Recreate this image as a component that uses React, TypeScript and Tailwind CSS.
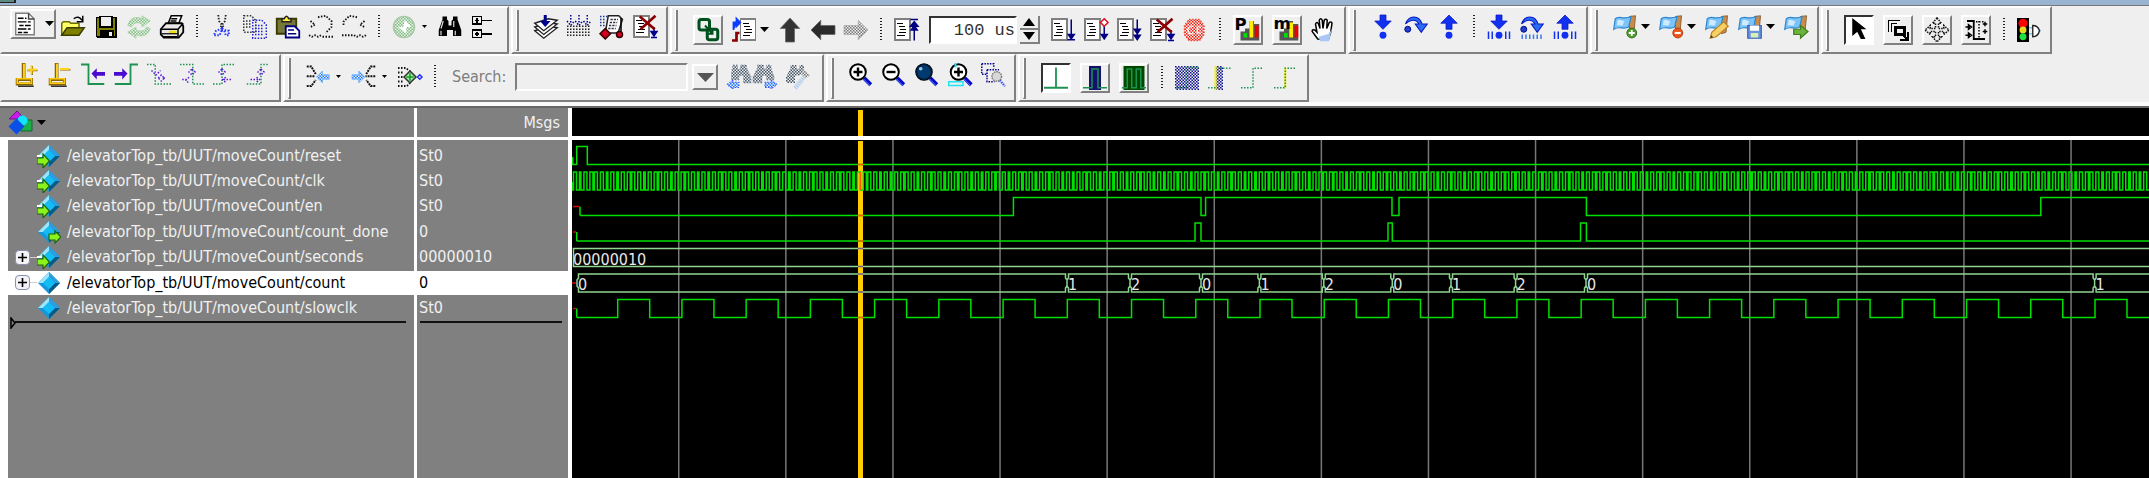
import React from 'react';

type IconName = keyof typeof icons;

const page = (
  <g shapeRendering="crispEdges">
    <path d="M0 0h11v15H0z" fill="#808080" />
    <path d="M1 1h9v13H1z" fill="#fff" />
    <path d="M2 3.5h4M3 5.5h4M4 7.5h4M3 9.5h5M2 11.5h5" stroke="#000" />
  </g>
);

const bookmark = (
  <g>
    <path d="M11 1l4-.5-1 11-3 1z" fill="#c98d4b" stroke="#8a5a2b" strokeWidth=".6" />
    <path d="M1.5 2.5C4 0 7 3.500 12 1l-1.500 7C7 10 4 7 .5 9.500z" fill="#7cc4f7" stroke="#2f86cf" strokeWidth=".8" />
    <path d="M3 3.500c2-1 3 .5 4.500.5L6.500 7C5 7 3.500 6.500 2.500 7z" fill="#cdeaff" />
  </g>
);

const lens = (
  <g>
    <path d="M10 10l4.500 4.500" stroke="#0808c8" strokeWidth="2.600" />
    <path d="M9.500 10.500l4.500 4.500" stroke="#4a6cf0" strokeWidth=".7" />
    <circle cx="6" cy="6" r="5.200" fill="#fff" stroke="#000" strokeWidth="1.300" />
  </g>
);

const stepDown = <path d="M6 0h4v4h3.500L8 9.500 2.500 4H6z" fill="#1230f0" stroke="#0a1ac0" strokeWidth=".5" />;
const stepUp = <path d="M6 9.500h4V5.500h3.500L8 0 2.500 5.500H6z" fill="#1230f0" stroke="#0a1ac0" strokeWidth=".5" />;
const stepOver = (
  <g>
    <path d="M1 6C3 0 10-.5 12 6h3.500L11.500 11.500 7.500 6H10C8 2.500 4 3 1 6z" fill="#2a6cf5" stroke="#0a1ac0" strokeWidth=".7" />
    <circle cx="2.500" cy="9.500" r="2" fill="#2040d0" stroke="#000080" strokeWidth=".6" />
  </g>
);
const bars = <path d="M1 11v5M3.500 11v5M12.500 11v5M15 11v5" stroke="#1230f0" strokeWidth="1" />;

const icons = {
  open: (
    <g>
      <path d="M.5 13.500V5.500l1-1h4l1 1H12v3" fill="#ffff66" stroke="#6b6b00" />
      <path d="M.5 13.500L4 8.500h11.500L12 13.500z" fill="#808000" stroke="#3d3d00" />
      <path d="M8.500 2.500q3-2.500 5.500 1M14.500.5v4h-4" stroke="#000" />
    </g>
  ),
  save: (
    <g shapeRendering="crispEdges">
      <path d="M1 1h14v14H2l-1-1z" fill="#000" />
      <path d="M2 2h12v12H2z" fill="#808000" />
      <path d="M4 1h8v7H4z" fill="#efefef" stroke="#000" />
      <path d="M4 10h9v5H4z" fill="#000" />
      <path d="M10 11h2v3h-2z" fill="#efefef" />
    </g>
  ),
  refresh: (
    <g fill="url(#dither-green)" stroke="#a9d5a9" strokeWidth=".6">
      <path d="M.5 7C2 1 7 1 10 2.500V.5L15.500 4 10 8V6C6 4 4 6 3 8z" />
      <path d="M15.500 9C14 14 9 15 6 13v2.500L.5 11.500 6 8v2c3 1.500 6 .5 7-2z" />
    </g>
  ),
  print: (
    <g>
      <path d="M5.500 5.500L7.500.5h7L12.500 5.500z" fill="#fff" stroke="#000" />
      <path d="M.5 9.500l3.500-4h10.500l1 2v4l-3 3.500h-10l-2-2z" fill="#e8e8e8" stroke="#000" strokeWidth="1.200" />
      <path d="M.5 9.500h11.500l3.500-4M7.500 2.500h4M7 4h4M2.500 14.500h9M12 9.500v5" stroke="#000" />
      <path d="M6 11.500h5" stroke="#f0e000" strokeWidth="2" />
      <path d="M1 12.500h11" stroke="#000" strokeWidth=".8" />
    </g>
  ),
  cut: (
    <g strokeDasharray="1 1">
      <path d="M5.500 0l.5 4 3 4M10.500 0L10 4 7 8" stroke="#222" strokeWidth="1.200" />
      <path d="M8 8v3M8 9l3 1.500h1.500v3h-2l-1-3M8 9l-4 1.500-1.500 3h4l1-3" stroke="#2030ff" strokeWidth="1.300" />
    </g>
  ),
  copy: (
    <g strokeDasharray="1 1">
      <path d="M.5.5h5l3 3v8h-8zM2 4h4M2 6h4M2 8h4" stroke="#333" />
      <path d="M6.500 3.500h6l3 3v9h-9zM8 7h5M8 9h6M8 11h6M8 13h6" stroke="#2222d8" />
    </g>
  ),
  paste: (
    <g>
      <path d="M.5 2.500h13v10H.5z" fill="#77773a" stroke="#3b3b00" strokeWidth="1.200" />
      <path d="M4 4.500V2.500h1.500Q7-.8 8.500 2.500H10v2z" fill="#ffee33" stroke="#222" />
      <path d="M6.500 7.500h6l3 3v4.500h-9z" fill="#fff" stroke="#000080" strokeWidth="1.200" />
      <path d="M8 10h4M8 12.500h5.500" stroke="#000080" />
    </g>
  ),
  undo: (
    <g stroke="#111" strokeDasharray="1 1" strokeWidth="1.200">
      <path d="M1 4l3 2.500L1 8M6 1.500l5-1 4 3.500v4l-4 4" />
      <path d="M0 13.500l2 1 2-1 2 1 2-1M9 14.500h7" />
    </g>
  ),
  redo: (
    <g stroke="#111" strokeDasharray="1 1" strokeWidth="1.200">
      <path d="M15 4l-3 2.500 3 1.500M10 1.500l-5-1-4 4v3" />
      <path d="M16 13.500l-2 1-2-1-2 1-2-1M7 13.500H0" />
    </g>
  ),
  run: (
    <g>
      <circle cx="8" cy="8" r="7" fill="url(#dither-green)" stroke="#a9c9a9" />
      <path d="M8.500 3.500L13 8H9.500v4.500L4 8h3.500z" fill="#fff" />
    </g>
  ),
  find: (
    <g fill="#000">
      <path d="M3 1h3v2l1 1v3h2V4l1-1V1h3v2l2.500 7v4H10v-4H6v4H.5v-4L3 3z" />
      <path d="M3.500 4L2 9M10.500 4v4M2 10.500v3M11.500 10.500v3" stroke="#ddd" strokeWidth=".8" />
    </g>
  ),
  tree: (
    <g stroke="#000" shapeRendering="crispEdges">
      <path d="M1 1h6v5H1zM1 10h6v5H1z" strokeWidth="1.300" />
      <path d="M7 3.500h7M7 12.500h7M4 2v3M2.500 3.500h3M4 11v3M2.500 12.500h3" />
    </g>
  ),
  layers: (
    <g fill="#fff" stroke="#222" strokeWidth=".9">
      <path d="M.5 10.500l9-3 6 1-9 7z" />
      <path d="M.5 8l9-3 6 1-9 7z" />
      <path d="M.5 5.500l9-3 6 1-9 7z" />
      <path d="M6.500 0h2v4h2.500L7.500 8 4 4h2.500z" fill="#000090" stroke="none" />
    </g>
  ),
  layersAll: (
    <g strokeDasharray="1 1">
      <path d="M2.500 0v5M8 0v5M13.500 0v5M0 4l2.500 3L5 4M5.500 4L8 7l2.500-3M11 4l2.500 3L16 4" stroke="#000090" />
      <path d="M0 7.500h16M0 9.500h16M0 11.500h16M0 13.500h16" stroke="#222" />
    </g>
  ),
  profile: (
    <g>
      <path d="M5.500.5h7l2.500 2.500-3 9H3.500z" fill="#fff" stroke="#222" />
      <path d="M7 3h5M6.500 5h5M6 7h5M5.500 9h5" stroke="#334" strokeDasharray="1.500 .7" />
      <path d="M0 1h5M0 3h4M0 5h4M0 7h3" stroke="#223a9a" strokeDasharray="1 1" />
      <path d="M3.500 9l3.500 3.500L3.500 16 0 12.500z" fill="#d00020" stroke="#300" />
      <circle cx="13" cy="13" r="2" fill="#d00020" stroke="#300" />
      <path d="M14 2v9" stroke="#000" />
    </g>
  ),
  pageDelete: (
    <g>
      {page}
      <path d="M14 8v6M12 11h4l-2 3z M12 15h4" stroke="#000090" fill="#000090" />
      <path d="M4.500 1l10 8.500M15 .5L5 9.500" stroke="#8b0000" strokeWidth="1.800" />
    </g>
  ),
  link: (
    <g stroke="#00501e" strokeWidth="2">
      <rect x="2" y="1" width="7" height="7" rx="1.500" />
      <rect x="7.500" y="7.500" width="7" height="7" rx="1.500" />
      <path d="M6 5l5 5.500M8 10.500h3V7" strokeWidth="1.300" />
    </g>
  ),
  restart: (
    <g>
      <g transform="translate(5 0)">{page}</g>
      <path d="M1 8V3h3M3 .5v5L5.500 3z" stroke="#0a3cff" fill="#0a3cff" strokeWidth="1.200" />
      <path d="M0 15h3v-5h2" stroke="#8b0000" strokeWidth="1.800" />
    </g>
  ),
  up: <path d="M8 0l6.500 7H11v9H5V7H1.500z" fill="#333" stroke="#666" strokeWidth=".5" />,
  left: <path d="M0 8l6.500-6.500V5H16v6H6.500v3.500z" fill="#2b2b2b" stroke="#666" strokeWidth=".5" />,
  right: <path d="M16 8L9.500 1.500V5H0v6h9.500v3.500z" fill="url(#dither-gray)" stroke="#aaa" strokeWidth=".5" />,
  pageUp: <g>{page}<path d="M13.500 3v12M11 1h5M11 5.500l2.500-3 2.500 3zM11.500 8l2-3 2 3z" stroke="#000080" fill="#000080" /></g>,
  pageRun: <g>{page}<path d="M13.500 1v12M11.500 11h4l-2 3zM11 14.500h5" stroke="#000080" fill="#000080" /></g>,
  pageContinue: (
    <g>
      {page}
      <path d="M13.500 5v8M11.500 11h4l-2 3z" stroke="#000080" fill="#000080" />
      <path d="M13.500 .5L16 3l-2.500 2.500L11 3z" fill="#fff" stroke="#e01020" />
    </g>
  ),
  pageRunAll: <g>{page}<path d="M13.500 1v12M11.500 7.500h4l-2 3zM11.500 11.500h4l-2 3z" stroke="#000080" fill="#000080" /></g>,
  stop: (
    <g>
      <path d="M4 1h7l3 4v6l-3 4H4l-3-4V5z" fill="url(#dither-red)" stroke="#f04a35" strokeDasharray="1 1" />
      <path d="M7 5.500H4.500L3 8l1.500 2.500H7M12 6H9.500v4H12" stroke="#fff" strokeWidth=".8" />
    </g>
  ),
  perf: (
    <g>
      <path d="M3 15V9h3v-2h3V2h3v2h3.500v11z" fill="#555" />
      <path d="M5 10h2.500v3H5z" fill="#0d0" />
      <path d="M9 2h2.500v11H9z" fill="#fe0" />
      <path d="M12.500 5H15v8h-2.500z" fill="#e00" />
      <text x="-1" y="8" fontSize="11" fontWeight="700" fill="#000" className="font-['DejaVu_Sans']">P</text>
    </g>
  ),
  memory: (
    <g>
      <path d="M3 15V9h3v-2h3V2h3v2h3.500v11z" fill="#555" />
      <path d="M6 10h2.500v3H6z" fill="#0d0" />
      <path d="M9.500 3H12v10H9.500z" fill="#fe0" />
      <path d="M13 5h2.500v8H13z" fill="#e00" />
      <text x="-1" y="7" fontSize="11" fontWeight="700" fill="#000" className="font-['DejaVu_Sans']">m</text>
    </g>
  ),
  hand: (
    <g>
      <path d="M4.500 14L.8 9Q.5 7.500 2.500 8l1.500 1.500L3 4q1-2 2 0l1 3-.5-5.500q1-2 2 0L8 7l.8-5.500q1-1.500 2 0L10.500 7l1.700-4q1.500-1 1.800.5L13 10l-1.500 4.500z" fill="#fff" stroke="#000" />
      <path d="M5 12.500l7-2 2-3.500-2 8.500H6z" fill="#aac8f5" />
    </g>
  ),
  stepIn: <g>{stepDown}<circle cx="8" cy="13.500" r="2.300" fill="#1230f0" /></g>,
  stepOver,
  stepOut: <g>{stepUp}<circle cx="8" cy="13.500" r="2.300" fill="#1230f0" /></g>,
  stepInBars: <g>{stepDown}<circle cx="8" cy="13.500" r="2.300" fill="#1230f0" />{bars}</g>,
  stepOverBars: <g>{stepOver}<path d="M1.500 13v3M4 13v3M6.500 13v3M9 13v3M11.500 13v3M14 13v3" stroke="#3f78ee" /></g>,
  stepOutBars: <g>{stepUp}<circle cx="8" cy="13.500" r="2.300" fill="#1230f0" />{bars}</g>,
  markAdd: <g>{bookmark}<circle cx="12.500" cy="12" r="3.300" fill="#4c9a2e" stroke="#2e6e18" strokeWidth=".6" /><path d="M12.500 10v4M10.500 12h4" stroke="#fff" strokeWidth="1.200" /></g>,
  markRemove: <g>{bookmark}<circle cx="12.500" cy="12" r="3.300" fill="#e8561c" stroke="#b03a0c" strokeWidth=".6" /><path d="M10.500 12h4" stroke="#fff" strokeWidth="1.400" /></g>,
  markEdit: <g>{bookmark}<path d="M3.500 15.500l1-4 8-7 3 3-8 7z" fill="#f8cf62" stroke="#b8862a" strokeWidth=".8" /><path d="M3.500 15.500l.6-2 1.400 1.400z" fill="#333" /></g>,
  markSave: <g>{bookmark}<path d="M6.500 7h9v8.500h-9z" fill="#6b93e0" stroke="#3a62b8" strokeWidth=".8" /><path d="M8 7h6v3.500H8z" fill="#fff" /><path d="M8.500 12h5v3h-5z" fill="#d9f0b0" /></g>,
  markGo: <g>{bookmark}<path d="M6.500 9.500H11V7l5 4-5 4.500V13H6.500z" fill="#6cb33c" stroke="#3d7d1c" strokeWidth=".8" /></g>,
  pointer: <path d="M4 1l7.500 6H8.500l3 6.500H9.500L7 8.500 4 11z" fill="#000" stroke="#000" />,
  zoomMode: (
    <g stroke="#000" shapeRendering="crispEdges">
      <path d="M1.500 9V1.500h8M3.500 9V3.500h4" strokeWidth=".8" />
      <path d="M6 6h6v5H6z" strokeWidth="2" />
      <path d="M11 11l3 3M14.500 9v5.500H9" strokeWidth="1.200" />
    </g>
  ),
  pan: (
    <g stroke="#111" strokeDasharray="1 .7">
      <path d="M8 0l3 3.500H9v3.500h3.500V5L16 8l-3.500 3V9H9v3.500h2L8 16l-3-3.500h2V9H3.500v2L0 8l3.500-3v2H7V3.500H5z" />
    </g>
  ),
  edit: (
    <g stroke="#000">
      <path d="M2 2h4.500v12H14" strokeWidth="1.200" />
      <path d="M6 2.500h8M10 2v12" strokeDasharray="1 1" />
      <path d="M1 6h3M1 11.500h3M3 4.500v3L5 6zM3 10v3l2-1.500zM15.500 4h-3M15.500 9h-3M14 2.500v3M14 7.500v3" />
    </g>
  ),
  traffic: (
    <g>
      <path d="M0 0h8v16H0z" fill="#000" />
      <circle cx="4" cy="3.500" r="3" fill="#f00" />
      <circle cx="4" cy="8" r="2.300" fill="#e8d820" />
      <circle cx="4" cy="12.500" r="2.300" fill="#20e040" />
      <path d="M8 6.500h2.500M8 10.500h2.500M15 8.500h1" stroke="#7ac8ee" />
      <path d="M10.500 5v7.500q3.500 0 4.500-4-1-3.500-4.500-3.500z" fill="#fff" stroke="#222" strokeWidth=".9" />
    </g>
  ),
  cursorAdd: (
    <g>
      <path d="M5 .5h1.500v10H5zM8 5h7M11.500 2v6" stroke="#8a6400" />
      <path d="M6 .5v10M8 4.500h6.500M11 1.500v6" stroke="#ffd21a" strokeWidth="1.200" />
      <path d="M1.500 11h9.500v3H1.500z" fill="#efefef" stroke="#8a6400" strokeWidth="2" />
      <path d="M1.500 10.500h9.500v3H1.500z" stroke="#ffcb05" />
      <path d="M2 15.500h10.500" stroke="#222" strokeWidth=".9" />
    </g>
  ),
  cursorRemove: (
    <g>
      <path d="M5 .5h1.500v10H5zM8 4.500h7" stroke="#8a6400" />
      <path d="M6 .5v10M8 4h6.500" stroke="#ffd21a" strokeWidth="1.200" />
      <path d="M1.500 11h9.500v3H1.500z" fill="#efefef" stroke="#8a6400" strokeWidth="2" />
      <path d="M1.500 10.500h9.500v3H1.500z" stroke="#ffcb05" />
      <path d="M2 15.500h10.500" stroke="#222" strokeWidth=".9" />
    </g>
  ),
  edgePrev: <g><path d="M0 1h5v13h10.500" stroke="#1f9150" strokeWidth="1.200" /><path d="M7 7l3.500-3.500V6H16v2.500h-5.500V11z" fill="#4a0ad0" /></g>,
  edgeNext: <g><path d="M16 1h-5v13H.5" stroke="#1f9150" strokeWidth="1.200" /><path d="M9 7L5.500 3.500V6H0v2.500h5.500V11z" fill="#4a0ad0" /></g>,
  fallPrev: <g strokeDasharray="1 1"><path d="M0 1h5.500v13H16" stroke="#1f9150" /><path d="M3 5l3 3 3-3M7.500 10l2-2 2 2-2 2zM11 10h2" stroke="#5a1ad8" /></g>,
  fallNext: <g strokeDasharray="1 1"><path d="M0 1h8.500v13H16" stroke="#1f9150" /><path d="M8 4l2 2-2 2-2-2zM6 9.500l-2 2 2 2M1.500 11h4" stroke="#5a1ad8" /></g>,
  risePrev: <g strokeDasharray="1 1"><path d="M14 1H6v13H0" stroke="#1f9150" /><path d="M6 4l2 2-2 2-2-2zM8.500 9.500l-2 1.500 2 2M7 11h5" stroke="#5a1ad8" /></g>,
  riseNext: <g strokeDasharray="1 1"><path d="M14.500 1H10v13H0" stroke="#1f9150" /><path d="M10 4l2 2-2 2-2-2zM7 9.500l2 1.500-2 2M3 11h5" stroke="#5a1ad8" /></g>,
  collapse: (
    <g>
      <path d="M.5 1h3l3 5M.5 7.500h5.500M.5 14h3l3-4" stroke="#111" strokeDasharray="1.300 .6" strokeWidth="1.300" />
      <path d="M7 8l4-4v2.500h4.500v3H11V12z" fill="url(#dither-blue)" stroke="#6ab0ff" strokeWidth=".5" />
    </g>
  ),
  expand: (
    <g>
      <path d="M15.500 1h-3l-3 5M15.500 7.500H9M15.500 14h-3l-3-4" stroke="#111" strokeDasharray="1.300 .6" strokeWidth="1.300" />
      <path d="M8.500 8l-4-4v2.500H0v3h4.500V12z" fill="url(#dither-blue)" stroke="#6ab0ff" strokeWidth=".5" />
    </g>
  ),
  merge: (
    <g>
      <path d="M0 2h5l3 2M0 5h3M0 8h3M0 11h3M0 14h6l2-2" stroke="#111" strokeDasharray="1 1" strokeWidth="1.200" />
      <path d="M8 4l4 4-4 4-4-4z" fill="#9fe89f" stroke="#333" />
      <path d="M8 5.500v5M5.500 8h5" stroke="#1a9a2a" />
      <path d="M14.500 6.500L16 8l-1.500 1.500L13 8z" stroke="#2030ff" />
    </g>
  ),
  findPrev: (
    <g>
      <path d="M4 0h3v2l1 1 1-1V0h4v2l3 6v4h-5V7H8v3H3V5z" fill="url(#dither-slate)" stroke="#8a98a8" strokeDasharray="1 1" strokeWidth=".6" />
      <path d="M0 13l4-3v1.500h4V15H4v1z" fill="url(#dither-blue)" stroke="#4050ff" strokeDasharray="1 1" strokeWidth=".7" />
    </g>
  ),
  findNext: (
    <g>
      <path d="M3 0h4v2l1 1 1-1V0h3v2l2 6v2H9V7H6v5H0V8l3-6z" fill="url(#dither-slate)" stroke="#8a98a8" strokeDasharray="1 1" strokeWidth=".6" />
      <path d="M16 13l-4-3v1.500H8V15h4v1z" fill="url(#dither-blue)" stroke="#4050ff" strokeDasharray="1 1" strokeWidth=".7" />
    </g>
  ),
  findOptions: (
    <g>
      <path d="M3 0h4v2l1 1 1-1V0h3v3L9 7H6v5H0V8l3-6z" fill="url(#dither-slate)" />
      <path d="M12 3l4 4-3 2-3-3z" fill="url(#dither-gray)" />
      <path d="M6 15.500L12 8" stroke="#b4cdf0" strokeWidth="3" strokeDasharray="1 .5" />
    </g>
  ),
  zoomIn: <g>{lens}<path d="M6 3v6M3 6h6" stroke="#000" strokeWidth="1.600" /></g>,
  zoomOut: <g>{lens}<path d="M3 6h6" stroke="#000" strokeWidth="1.600" /></g>,
  zoomFull: <g>{lens}<circle cx="6" cy="6" r="5" fill="#003a6e" stroke="#001a33" /><circle cx="3.800" cy="3.800" r="1.200" fill="#9cc4e8" /></g>,
  zoomCursor: (
    <g>
      <path d="M.5 12.500h9.500v2.500H.5z" stroke="#1ee4f4" />
      <g transform="translate(1 0)">{lens}</g>
      <path d="M7 3v6M4 6h6" stroke="#000" strokeWidth="1.600" />
      <path d="M5 0v3" stroke="#1ee4f4" strokeWidth="1.300" />
    </g>
  ),
  zoomArea: (
    <g>
      <path d="M.5.5h8v3M.5.5v7h3M4 4.500h8M4 4.500v8h5" stroke="#000090" strokeDasharray="1 .8" />
      <circle cx="10.500" cy="9" r="3.200" fill="#d8d8d8" stroke="#777" strokeDasharray="1 .6" />
      <path d="M12.500 11.500l3.500 4" stroke="#4a5cff" strokeWidth="1.600" strokeDasharray="1 .6" />
    </g>
  ),
  trace: <path d="M8 1v13.500M0 14.500h16" stroke="#1f9150" strokeWidth="1.200" />,
  traceEvents: <g><path d="M4 0h8v16H4z" fill="#12126e" /><path d="M0 14.500h6V2h4v12.500h6" stroke="#1f9150" /></g>,
  traceAll: <g><path d="M1 0h14v16H1z" fill="#004a00" /><path d="M0 14.500h3.500V2h3v12.500h3V2h3v12.500H16" stroke="#1f9150" /></g>,
  deltaAll: <g><path d="M0 0h16v16H0z" fill="url(#dither-navy)" /><path d="M1 14.500h7V1h8" stroke="#1f9150" strokeDasharray="1 1" /></g>,
  deltaNear: <g><path d="M5 0h5v16H5z" fill="url(#dither-navy)" /><path d="M5 0v16" stroke="#f2ee20" strokeWidth="1.400" /><path d="M0 14.500h5M8 1.500h7" stroke="#1f9150" strokeDasharray="1 1" /></g>,
  deltaOff: <path d="M0 14.500h8V1.500h7" stroke="#1f9150" strokeDasharray="1 1" />,
  deltaCursor: <g><path d="M7.500 1v14" stroke="#f2ee20" strokeWidth="1.400" /><path d="M0 14.500h7.500V1.500h7" stroke="#1f9150" strokeDasharray="1 1" /></g>,
};

const Glyph: React.FC<{ name: IconName }> = ({ name }) => (
  <svg className="size-6 shrink-0 overflow-visible" viewBox="0 0 16 16" fill="none" aria-hidden="true">{icons[name]}</svg>
);

const Caret: React.FC<{ small?: boolean }> = ({ small }) => (
  <svg className="h-1.5 w-[13px] shrink-0" viewBox="0 0 13 6" aria-hidden="true">
    <path d={small ? 'M6 1h5L8.500 4z' : 'M4 0h9L8.500 5z'} fill="#000" />
  </svg>
);

const Tool: React.FC<{ name: IconName; menu?: 'small' | 'large' }> = ({ name, menu }) => (
  <button type="button" aria-label={name} className="flex shrink-0 items-center">
    <Glyph name={name} />
    {menu && <Caret small={menu === 'small'} />}
  </button>
);

const RaisedTool: React.FC<{ name: IconName; pressed?: boolean }> = ({ name, pressed }) => (
  <button
    type="button"
    aria-label={name}
    aria-pressed={pressed}
    className={`flex size-[30px] shrink-0 items-center justify-center border-2 ${
      pressed ? 'border-t-[#333] border-l-[#333] border-r-white border-b-white bg-white' : 'border-t-white border-l-white border-r-[#808080] border-b-[#808080]'
    }`}
  >
    <Glyph name={name} />
  </button>
);

const Separator = () => (
  <div className="flex w-2 shrink-0 justify-center">
    <div className="h-6 w-[2px] bg-[repeating-linear-gradient(#222_0_1px,transparent_1px_3px)]" />
  </div>
);

const Toolbar: React.FC<{ label: string; first?: boolean; wide?: boolean; children: React.ReactNode }> = ({ label, first, wide, children }) => (
  <div
    role="toolbar"
    aria-label={label}
    className={`flex h-12 shrink-0 border-2 border-t-white border-r-[#808080] border-b-[#808080] ${
      first ? 'border-l-[#efefef]' : 'ml-0.5 border-l-white pl-[3px]'
    }`}
  >
    {!first && <div className="mt-0.5 mr-[15px] h-[41px] w-[3px] border-r-2 border-b-2 border-l border-r-[#808080] border-b-[#808080] border-l-white" />}
    <div className={`mt-[7px] flex items-center gap-[9px] self-start ${wide ? 'mr-3' : 'mr-[9px]'}`}>{children}</div>
  </div>
);

const signals = [
  { name: 'reset', value: 'St0', port: 'in' },
  { name: 'clk', value: 'St0', port: 'in' },
  { name: 'en', value: 'St0', port: 'in' },
  { name: 'count_done', value: '0', port: 'out' },
  { name: 'seconds', value: '00000010', port: 'in', bus: true },
  { name: 'count', value: '0', port: '', bus: true, selected: true },
  { name: 'slowclk', value: 'St0', port: '' },
];

const SignalIcon: React.FC<{ port: string }> = ({ port }) => (
  <svg className="size-6 shrink-0" viewBox="0 0 24 24" aria-hidden="true">
    <path d="M12 1l11 11-11 11L1 12z" fill="#1597dc" />
    <path d="M12 1v5L6 12H1z" fill="#9be4fa" />
    <path d="M12 1l11 11h-5l-6-6z" fill="#2a9ee0" />
    <path d="M23 12L12 23v-5l6-6z" fill="#065a86" />
    <path d="M12 6l6 6-6 6-6-6z" fill="#12bdf5" />
    {port === 'in' && <path d="M0 14h6v-4l6.500 7L6 24v-4H0z" fill="#8cf21c" stroke="#1c6410" strokeWidth="1.200" />}
    {port === 'in' && <path d="M0 11h5v2H0z" fill="#fff" />}
    {port === 'out' && <path d="M12 14h6v-3l6 6-6 6v-3h-6z" fill="#8cf21c" stroke="#1c6410" strokeWidth="1.200" />}
  </svg>
);

// waveform geometry
const ROW = 25.5;
const hi = (row: number) => 6.5 + row * ROW;
const lo = (row: number) => hi(row) + 18;
const END = 4000;

// square wave that starts low and toggles at each edge
const digital = (row: number, start: number, edges: number[]) => {
  let high = false;
  let d = `M${start} ${lo(row)}`;
  for (const x of edges) {
    d += `H${x}V${high ? lo(row) : hi(row)}`;
    high = !high;
  }
  return d + `H${END}`;
};

const clkEdges = Array.from({ length: 900 }, (_, k) => Math.round(1 + k * 1.794) * 1.494);
const slowEdges = Array.from({ length: 48 }, (_, k) => 45.7 + Math.floor(k / 2) * 64.23 + (k % 2) * 32);

const traces = [
  'M.7 17v7.500' + digital(0, 0, [4.7, 15.3]),
  'M.7 42v8' + digital(1, 0, clkEdges),
  `M8 ${hi(2) + 9}V${lo(2)}` + digital(2, 8, [441.4, 629, 633.6, 820, 827, 1014.4, 1468.8]),
  `M4.700 ${hi(3) + 9}V${lo(3)}` + digital(3, 4.7, [623, 629, 816, 820.3, 1008.5, 1014.4]),
  `M4.700 ${hi(6) + 9}V${lo(6)}` + digital(6, 4.7, slowEdges),
];

const counts: [number, string][] = [
  [5, '0'], [495, '1'], [558, '2'], [629, '0'], [687.4, '1'], [751.8, '2'],
  [820.3, '0'], [879, '1'], [943.6, '2'], [1014, '0'], [1522.6, '1'],
];

// each value is a closed cell whose ends bulge out at mid height
const busPath = counts
  .map(([x], i) => {
    const end = counts[i + 1] ? counts[i + 1][0] : END;
    return `M${x + 1.5} ${hi(5)}H${end - 1.5}v4l1.500 2v6l-1.500 2v4H${x + 1.5}v-4l-1.500-2v-6l1.500-2z`;
  })
  .join('');

const Waves = () => (
  <svg className="absolute inset-0 size-full" role="img" aria-label="Waveforms">
    {Array.from({ length: 30 }, (_, i) => (
      <rect key={i} x={106 + i * 107.1} y="0" width="1.500" height="100%" fill="#777" />
    ))}
    <rect x="286" y="1" width="5" height="100%" fill="#ffcc00" />
    <g fill="none" strokeWidth="1.500">
      {traces.map((d, i) => <path key={i} d={d} stroke="#00e000" />)}
      <path d={`M1 ${hi(2) + 9}h6M1 ${hi(3) + 9}h3M0 ${hi(5) + 9}h4M1 ${hi(6) + 9}h3`} stroke="#e00000" />
      <path d={`M${END} ${hi(4)}H1.500V${lo(4)}H${END}`} stroke="#8fd48f" />
      <path d={busPath} stroke="#8fd48f" />
      <path d={`M286 ${lo(0)}h5M286 ${lo(2)}h5M286 ${lo(3)}h5M286 ${lo(6)}h5M288.500 ${hi(1)}V${lo(1)}`} stroke="#ff5a00" />
      <path d={`M286 ${hi(4)}h5M286 ${lo(4)}h5M286 ${hi(5)}h5M286 ${lo(5)}h5`} stroke="#7a5c8c" />
    </g>
    <g fill="#e8e8e8" fontSize="16">
      <text x="1" y={hi(4) + 16}>00000010</text>
      {counts.map(([x, v]) => <text key={x} x={x + 1} y={hi(5) + 16}>{v}</text>)}
    </g>
  </svg>
);

const App: React.FC = () => {
  return (
    <div className="flex min-h-screen flex-col overflow-hidden bg-[#efefef] font-['DejaVu_Sans_Condensed','Noto_Sans',sans-serif] text-base leading-5">
      <svg className="absolute size-0" aria-hidden="true">
        <defs>
          {[
            ['green', '#7cc07c'],
            ['gray', '#777777'],
            ['slate', '#445566'],
            ['blue', '#1878ff'],
            ['red', '#f02010'],
            ['navy', '#101090'],
          ].map(([id, color]) => (
            <pattern key={id} id={`dither-${id}`} width="2" height="2" patternUnits="userSpaceOnUse">
              <path d="M0 0h1v1H0zM1 1h1v1H1z" fill={color} />
            </pattern>
          ))}
        </defs>
      </svg>

      <div className="h-1.5 shrink-0 border-b border-[#777] bg-[#99b4d1]">
        <div className="h-[3px] w-4 border-r-2 border-b border-[#222] bg-[#5a8a80]" />
      </div>

      <div className="flex">
        <Toolbar label="Standard" first wide>
          <button type="button" aria-label="new" className="-mt-1.5 ml-2 -mr-1 flex h-[30px] w-[46px] items-center border-2 border-t-white border-l-white border-r-[#808080] border-b-[#808080] pl-[3px]">
            <svg className="h-6 w-[21px]" viewBox="0 0 14 16" aria-hidden="true">
              <path d="M.5.5h9l4 4v11H.5z" fill="#fff" stroke="#808080" />
              <path d="M9.500.5v4h4" fill="none" stroke="#444" />
              <path d="M2 4h4M7 4h1M2 6.500h6M9 6.500h2M3 9h3M7 9h4M2 11.500h6M9 11.500h2M2 14h3M6 14h3" stroke="#000" />
            </svg>
            <span className="ml-1.5"><Caret /></span>
          </button>
          <Tool name="open" />
          <Tool name="save" />
          <Tool name="refresh" />
          <Tool name="print" />
          <Separator />
          <Tool name="cut" />
          <Tool name="copy" />
          <Tool name="paste" />
          <Tool name="undo" />
          <Tool name="redo" />
          <Separator />
          <Tool name="run" menu="small" />
          <Tool name="find" />
          <Tool name="tree" />
        </Toolbar>
        <Toolbar label="Compile">
          <Tool name="layers" />
          <Tool name="layersAll" />
          <Tool name="profile" />
          <Tool name="pageDelete" />
        </Toolbar>
        <Toolbar label="Simulate">
          <RaisedTool name="link" />
          <Tool name="restart" menu="large" />
          <Tool name="up" />
          <Tool name="left" />
          <Tool name="right" />
          <Separator />
          <Tool name="pageUp" />
          <div className="mx-0.5 flex items-center gap-[3px]">
            <input
              type="text"
              aria-label="Run length"
              defaultValue="100 us"
              className="h-7 w-[88px] border-2 border-t-[#333] border-r-white border-b-white border-l-[#333] bg-white text-right font-['Liberation_Mono',monospace] text-[17px] text-[#333] outline-none"
            />
            <div className="flex w-5 flex-col">
              <button type="button" aria-label="Increase" className="flex h-3.5 items-center justify-center border-r-2 border-b-2 border-[#808080]">
                <svg className="h-2 w-3" viewBox="0 0 12 8" aria-hidden="true"><path d="M6 0l6 8H0z" /></svg>
              </button>
              <button type="button" aria-label="Decrease" className="flex h-3.5 items-center justify-center border-r-2 border-b-2 border-[#808080]">
                <svg className="h-2 w-3" viewBox="0 0 12 8" aria-hidden="true"><path d="M6 8l6-8H0z" /></svg>
              </button>
            </div>
          </div>
          <Tool name="pageRun" />
          <Tool name="pageContinue" />
          <Tool name="pageRunAll" />
          <Tool name="pageDelete" />
          <Tool name="stop" />
          <Separator />
          <RaisedTool name="perf" />
          <RaisedTool name="memory" />
          <Tool name="hand" />
        </Toolbar>
        <Toolbar label="Step">
          <Tool name="stepIn" />
          <Tool name="stepOver" />
          <Tool name="stepOut" />
          <Separator />
          <Tool name="stepInBars" />
          <Tool name="stepOverBars" />
          <Tool name="stepOutBars" />
        </Toolbar>
        <Toolbar label="Bookmarks">
          <Tool name="markAdd" menu="large" />
          <Tool name="markRemove" menu="large" />
          <Tool name="markEdit" />
          <Tool name="markSave" menu="large" />
          <Tool name="markGo" />
        </Toolbar>
        <Toolbar label="Mouse mode">
          <RaisedTool name="pointer" pressed />
          <RaisedTool name="zoomMode" />
          <RaisedTool name="pan" />
          <RaisedTool name="edit" />
          <Separator />
          <Tool name="traffic" />
        </Toolbar>
      </div>

      <div className="flex">
        <Toolbar label="Cursors" first>
          <span className="w-1" />
          <Tool name="cursorAdd" />
          <Tool name="cursorRemove" />
          <Tool name="edgePrev" />
          <Tool name="edgeNext" />
          <Tool name="fallPrev" />
          <Tool name="fallNext" />
          <Tool name="risePrev" />
          <Tool name="riseNext" />
        </Toolbar>
        <Toolbar label="Search" wide>
          <Tool name="collapse" menu="small" />
          <Tool name="expand" menu="small" />
          <Tool name="merge" />
          <Separator />
          <label htmlFor="search" className="ml-1 text-[#7d7d7d]">Search:</label>
          <div className="flex items-center gap-1">
            <input id="search" type="text" className="h-7 w-[173px] border-2 border-t-[#808080] border-r-white border-b-white border-l-[#808080] outline-none" />
            <button type="button" aria-label="Search history" className="flex h-[26px] w-[26px] items-center justify-center border-2 border-t-white border-r-[#808080] border-b-[#808080] border-l-white">
              <svg className="h-[9px] w-[17px]" viewBox="0 0 17 9" aria-hidden="true"><path d="M0 0h17L8.500 9z" fill="#555" /></svg>
            </button>
          </div>
          <div className="flex gap-0.5">
            <Tool name="findPrev" />
            <Tool name="findNext" />
          </div>
          <Tool name="findOptions" />
        </Toolbar>
        <Toolbar label="Zoom">
          <Tool name="zoomIn" />
          <Tool name="zoomOut" />
          <Tool name="zoomFull" />
          <Tool name="zoomCursor" />
          <Tool name="zoomArea" />
        </Toolbar>
        <Toolbar label="Expanded time">
          <RaisedTool name="trace" pressed />
          <RaisedTool name="traceEvents" />
          <RaisedTool name="traceAll" />
          <Separator />
          <Tool name="deltaAll" />
          <Tool name="deltaNear" />
          <Tool name="deltaOff" />
          <Tool name="deltaCursor" />
        </Toolbar>
      </div>

      <div className="h-1.5 shrink-0 border-b-2 border-[#666] bg-[#fafafa]" />

      <div className="flex flex-1">
        <div className="flex w-[572px] shrink-0 flex-col border-r-4 border-white bg-[#808080] text-[#f0f0f0]">
          <table className="w-full table-fixed border-separate border-spacing-0 text-left">
            <colgroup>
              <col className="w-[417px]" />
              <col />
            </colgroup>
            <thead>
              <tr className="h-8">
                <th className="border-r-[3px] border-b-[3px] border-white p-0 font-normal">
                  <button type="button" aria-label="Object filter" className="ml-2 flex items-center">
                    <svg className="size-[25px]" viewBox="0 0 25 25" aria-hidden="true">
                      <path d="M13 10h11v11H13z" fill="#1cb04a" stroke="#0b6b2c" />
                      <path d="M9 1l8 8H1z" fill="#c81ce8" stroke="#7a0f90" />
                      <circle cx="14.500" cy="10.500" r="5" fill="#10e4ff" />
                      <path d="M8.500 8.500l8 8-8 8-8-8z" fill="#0a50e6" />
                    </svg>
                    <Caret />
                  </button>
                </th>
                <th className="border-b-[3px] border-white p-0 pr-2 text-right font-normal">Msgs</th>
              </tr>
            </thead>
            <tbody>
              {signals.map(({ name, value, port, bus, selected }) => (
                <tr key={name} className="odd:h-[26px] even:h-[25px] first:h-[30px] first:[&>td]:pt-1">
                  <td className="border-r-[3px] border-l-8 border-white p-0">
                    <div className={`flex h-6 items-center pl-[7px] ${selected ? 'bg-white text-black' : ''}`}>
                      {bus ? (
                        <button type="button" aria-label={`Expand ${name}`} className="flex size-[15px] items-center justify-center rounded-sm border border-[#8a8fb0] bg-[#f4f4f8]">
                          <svg className="size-[9px]" viewBox="0 0 9 9" aria-hidden="true"><path d="M4.500 0v9M0 4.500h9" stroke="#000" strokeWidth="1.600" /></svg>
                        </button>
                      ) : (
                        <span className="w-[15px]" />
                      )}
                      <span className={`h-px w-[7px] ${bus ? 'bg-[#d0d0d0]' : ''}`} />
                      <SignalIcon port={port} />
                      <span className="ml-1.5">/elevatorTop_tb/UUT/moveCount/{name}</span>
                    </div>
                  </td>
                  <td className="p-0">
                    <div className={`flex h-6 items-center pl-0.5 ${selected ? 'bg-white text-black' : ''}`}>{value}</div>
                  </td>
                </tr>
              ))}
            </tbody>
          </table>
          <div className="relative flex flex-1 border-l-8 border-white">
            <svg className="absolute -top-1 left-0.5 h-3 w-2" viewBox="0 0 8 12" aria-hidden="true">
              <path d="M1 1l4 5-4 5z" fill="#808080" stroke="#000" strokeWidth="1.500" />
            </svg>
            <div className="w-[409px] border-r-[3px] border-white pr-2 pl-[7px]">
              <div className="h-0.5 bg-[#111]" />
            </div>
            <div className="flex-1 pr-1.5 pl-[3px]">
              <div className="h-0.5 bg-[#111]" />
            </div>
          </div>
        </div>

        <div className="flex min-w-0 flex-1 flex-col bg-black">
          <div className="h-8 border-b-4 border-white pt-0.5">
            <div className="ml-[286px] h-[26px] w-[5px] bg-[#ffcc00]" />
          </div>
          <div className="relative flex-1 overflow-hidden">
            <Waves />
          </div>
        </div>
      </div>
    </div>
  );
};

export default App;
